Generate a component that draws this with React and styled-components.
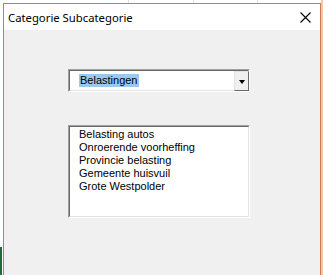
import React from "react";
import styled, { createGlobalStyle } from "styled-components";

const Global = createGlobalStyle`
  html, body { margin: 0; padding: 0; }
  body { width: 323px; height: 275px; overflow: hidden; background: #ffffff; }
`;

const Desktop = styled.div`
  width: 323px;
  height: 275px;
  box-sizing: border-box;
  padding: 3px 2px 0 3px;
  display: flex;
  background:
    linear-gradient(#1e6b35, #1e6b35) 0 247px / 2px 28px no-repeat,
    linear-gradient(#f3c6ad, #f3c6ad) 321px 0 / 2px 275px no-repeat,
    linear-gradient(#e2e2e2, #e2e2e2) 128px 0 / 1px 3px no-repeat,
    linear-gradient(#e2e2e2, #e2e2e2) 193px 0 / 1px 3px no-repeat,
    linear-gradient(#e2e2e2, #e2e2e2) 257px 0 / 1px 3px no-repeat,
    #ffffff;
`;

const Window = styled.div`
  flex: 1;
  display: flex;
  flex-direction: column;
  border: 1px solid #cf7a4a;
  border-bottom: none;
  background: #f0f0f0;
`;

const TitleBar = styled.div`
  height: 26px;
  display: flex;
  align-items: center;
  justify-content: space-between;
  background: #ffffff;
  padding: 0 9px 0 4px;
`;

const Title = styled.span`
  font-family: "Noto Sans", "Open Sans", sans-serif;
  font-size: 11.3px;
  color: #000;
`;

const Body = styled.div`
  flex: 1;
  display: flex;
  flex-direction: column;
  padding: 39px 0 0 64px;
  gap: 33px;
`;

const Sunken = styled.div`
  box-sizing: border-box;
  width: 182px;
  height: ${(p) => p.$h}px;
  background: #fff;
  border-top: 1px solid #a0a0a0;
  border-left: 1px solid #a0a0a0;
  border-right: 1px solid #ffffff;
  border-bottom: 1px solid #ffffff;
`;

const SunkenInner = styled.div`
  box-sizing: border-box;
  height: 100%;
  border-top: 1px solid #696969;
  border-left: 1px solid #696969;
  border-right: 1px solid #e3e3e3;
  border-bottom: 1px solid #e3e3e3;
  display: flex;
`;

const ComboText = styled.div`
  flex: 1;
  display: flex;
  align-items: center;
  padding-left: 9px;
`;

const Selected = styled.span`
  background: #99c9ef;
  font-family: "Liberation Sans", Arial, sans-serif;
  font-size: 11px;
  line-height: 13px;
  padding: 0 1px;
  color: #000;
`;

const DropButton = styled.div`
  width: 15px;
  box-sizing: border-box;
  background: #f0f0f0;
  border-top: 1px solid #e3e3e3;
  border-left: 1px solid #e3e3e3;
  border-right: 1px solid #696969;
  border-bottom: 1px solid #696969;
  display: flex;
  align-items: center;
  justify-content: center;
  margin: 0 -1px -1px 0;
`;

const Arrow = styled.div`
  width: 0;
  height: 0;
  border-left: 3.5px solid transparent;
  border-right: 3.5px solid transparent;
  border-top: 4px solid #000;
  margin-top: 1px;
`;

const List = styled.ul`
  list-style: none;
  margin: 0;
  padding: 1px 0 0 9px;
  font-family: "Liberation Sans", Arial, sans-serif;
  font-size: 11px;
  line-height: 13px;
  color: #000;
`;

const Item = styled.li`
  white-space: nowrap;
`;

const Close = () => (
  <svg width="11" height="11" viewBox="0 0 11 11">
    <path d="M0.5 0.5 L10.5 10.5 M10.5 0.5 L0.5 10.5" stroke="#000" strokeWidth="1.1" />
  </svg>
);

const items = [
  "Belasting autos",
  "Onroerende voorheffing",
  "Provincie belasting",
  "Gemeente huisvuil",
  "Grote Westpolder",
];

export default function App() {
  return (
    <>
      <Global />
      <Desktop>
        <Window>
          <TitleBar>
            <Title>Categorie Subcategorie</Title>
            <Close />
          </TitleBar>
          <Body>
            <Sunken $h={23}>
              <SunkenInner>
                <ComboText>
                  <Selected>Belastingen</Selected>
                </ComboText>
                <DropButton>
                  <Arrow />
                </DropButton>
              </SunkenInner>
            </Sunken>
            <Sunken $h={93}>
              <SunkenInner>
                <List>
                  {items.map((t) => (
                    <Item key={t}>{t}</Item>
                  ))}
                </List>
              </SunkenInner>
            </Sunken>
          </Body>
        </Window>
      </Desktop>
    </>
  );
}
